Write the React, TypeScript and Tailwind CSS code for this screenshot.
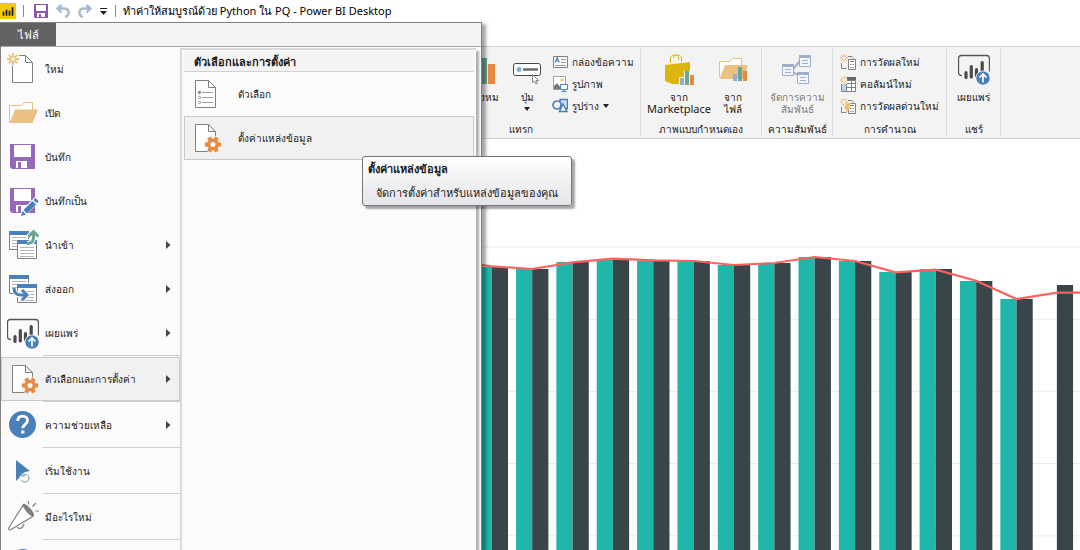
import { ReactNode } from "react";
import clsx from "clsx";

const BLUE = "#4a80ba";
const ORANGE = "#e8893f";
const GREEN = "#6ea592";
const GRAY = "#808080";

/* ---------- icons ---------- */

function Svg({ size = 32, children }: { size?: number; children: ReactNode }) {
  return (
    <svg width={size} height={size} viewBox={`0 0 ${size} ${size}`} fill="none" className="shrink-0" aria-hidden="true">
      {children}
    </svg>
  );
}

function Page() {
  return <path d="M5.5 2.5h13l7 7v20h-20zM18.5 2.5v7h7" fill="#fff" stroke={GRAY} />;
}

function Gear() {
  return (
    <g transform="translate(23 22.5)">
      <circle r="9" fill="#f1f1f1" />
      {[0, 60, 120].map((a) => (
        <rect key={a} x="-2" y="-8" width="4" height="16" fill={ORANGE} transform={`rotate(${a + 30})`} />
      ))}
      <circle r="5.8" fill={ORANGE} />
      <circle r="2.5" fill="#fff" />
    </g>
  );
}

function NewIcon() {
  return (
    <Svg>
      <Page />
      <circle cx="6" cy="6" r="7" fill="#fbfbfb" />
      <path d="M6 0v4M6 8v4M0 6h4M8 6h4M1.8 1.8l2.8 2.8M7.4 7.4l2.8 2.8M10.2 1.8L7.4 4.6M4.6 7.4l-2.8 2.8" stroke="#eabf72" strokeWidth="1.8" />
      <circle cx="6" cy="6" r="2.4" stroke="#eabf72" />
    </Svg>
  );
}

function OpenIcon() {
  return (
    <Svg>
      <path d="M2.5 25.5v-17h12l3-3h8v8" fill="#fff" stroke="#e8bf7f" />
      <path d="M8 12.5h23L25.5 26h-23z" fill="#e9c182" />
    </Svg>
  );
}

function Floppy() {
  return (
    <>
      <path d="M3 3h25v25H5l-2-2z" fill="#9768b9" />
      <path d="M7 4h17v12H7zM9 20h11v7H9z" fill="#fff" />
      <path d="M11 21h3v6h-3z" fill="#9768b9" />
    </>
  );
}

function SaveIcon() {
  return (
    <Svg>
      <Floppy />
    </Svg>
  );
}

function SaveAsIcon() {
  return (
    <Svg>
      <Floppy />
      <path d="M13 32l2-7L28 12l4 3-2 4-12 12z" fill="#fbfbfb" />
      <path d="M14 31l1.5-5 3.5 3.5zM16.5 25l9-9 3.5 3.5-9 9zM26.5 15l2-2 3.2 3.2-2 2z" fill={BLUE} />
    </Svg>
  );
}

function Windows() {
  return (
    <>
      <path d="M2.5 3v17.5h19V3" fill="#fff" stroke={GRAY} />
      <path d="M2 2h20v4H2z" fill={BLUE} />
      <path d="M5 8.5h14M5 11.5h14M5 14.5h5M5 17.5h5" stroke="#b5b5b5" />
      <path d="M10.5 12v17.5h19V12" fill="#fff" stroke={GRAY} />
      <path d="M9 10h22v1H9z" fill="#fbfbfb" />
      <path d="M10 11h20v4H10z" fill={BLUE} />
      <path d="M13 18.5h14M13 21.5h14M13 24.5h14M13 27.5h14" stroke="#b5b5b5" />
    </>
  );
}

function ImportIcon() {
  return (
    <Svg>
      <Windows />
      <path d="M20 14.5c4.5 0 6.5-2 6.5-6V4M21.5 7.500l5-5 5 5" stroke="#fbfbfb" strokeWidth="5" />
      <path d="M20 14.5c4.5 0 6.5-2 6.5-6V4M21.5 7.500l5-5 5 5" stroke={GREEN} strokeWidth="3" />
    </Svg>
  );
}

function ExportIcon() {
  return (
    <Svg>
      <Windows />
      <path d="M7 15c0 5 3 7 7 7h5M15 17l5 5-5 5" stroke="#fff" strokeWidth="5" />
      <path d="M7 15c0 5 3 7 7 7h5M15 17l5 5-5 5" stroke={BLUE} strokeWidth="3" />
    </Svg>
  );
}

function PublishIcon() {
  return (
    <Svg>
      <path d="M4 22.5c-2.5 0-3.500-1-3.500-3V5.500c0-2 1-3 3-3h25c2 0 3 1 3 3v13" stroke="#555" strokeWidth="1.3" />
      <path d="M8 19.5v5M13.3 13.500v10.500M18.500 16.500v6M24.200 9.500v9" stroke="#4a4a4a" strokeWidth="3.2" strokeLinecap="round" />
      <circle cx="25" cy="25" r="7.5" fill="#fbfbfb" />
      <circle cx="25" cy="25" r="6.8" fill={BLUE} />
      <path d="M25 29.500v-8M21.500 24.500l3.500-3.500 3.500 3.500" stroke="#fff" strokeWidth="1.7" />
    </Svg>
  );
}

function SettingsIcon() {
  return (
    <Svg>
      <Page />
      <Gear />
    </Svg>
  );
}

function OptionsIcon() {
  return (
    <Svg>
      <Page />
      <path d="M12 14.5h11M12 19.5h11M12 24.5h11" stroke="#a0a0a0" />
      <circle cx="9.5" cy="14.5" r="1.3" fill={GRAY} stroke={GRAY} strokeWidth=".6" />
      <circle cx="9.5" cy="19.5" r="1.2" stroke={GRAY} strokeWidth=".8" />
      <circle cx="9.5" cy="24.5" r="1.2" stroke={GRAY} strokeWidth=".8" />
    </Svg>
  );
}

function HelpIcon() {
  return (
    <Svg>
      <circle cx="15.5" cy="15.5" r="13.5" fill={BLUE} />
      <path d="M10.8 12c0-3 2-4.800 4.800-4.800 2.900 0 4.900 1.700 4.900 4.300 0 4-4.700 3.700-4.700 7.700" stroke="#fff" strokeWidth="2.8" />
      <path d="M14.2 21.500h3.200v3h-3.200z" fill="#fff" />
    </Svg>
  );
}

function StartIcon() {
  return (
    <Svg>
      <path d="M9 5l14 11-5 1-5 4v1l-4 4z" fill={BLUE} />
      <path d="M15.5 20.200c3-1.800 6.500 0 6.500 2.800 0 2.500-2 4-4 4-1.500 0-3-.8-3.500-2M14.500 17.500v3.500H18" stroke={GREEN} />
    </Svg>
  );
}

function NewsIcon() {
  return (
    <Svg>
      <path d="M16.5 3.500L2 26.500c-.8 1.700.4 2.800 2 2L26.500 15" fill="#fff" stroke={GRAY} strokeWidth="1.2" />
      <path d="M16 3c1.500-1 5 1.500 7.500 4.500s4.500 6.500 3 7.500-4.500-1-7-4.200S14.800 4.200 16 3z" fill={GRAY} />
      <path d="M10 26c2 2.500 6 1.500 7-3M21.500 0v3.500M25.500 5.500L29 2M28.500 10h3.500" stroke={GRAY} strokeWidth="1.2" />
    </Svg>
  );
}

function AboutIcon() {
  return (
    <Svg>
      <circle cx="16" cy="15" r="13" fill={BLUE} />
    </Svg>
  );
}

function VisualIcon() {
  return (
    <Svg>
      <path d="M8 5h9v26H8z" fill={GREEN} />
      <path d="M18 11h7v20h-7z" fill={ORANGE} />
    </Svg>
  );
}

function ButtonIcon() {
  return (
    <Svg>
      <rect x="2.5" y="10.5" width="27" height="12" rx="2" fill="#fff" stroke="#444" />
      <circle cx="8" cy="16.5" r="2.5" fill="#7fb0dc" />
      <path d="M12 16.5h15" stroke="#6b6b6b" strokeWidth="2.5" />
      <path d="M21.5 21.500v8l2-1.500 1.500 3 1.500-.8-1.500-2.700h2.500z" fill="#fff" stroke="#777" strokeWidth=".9" />
    </Svg>
  );
}

function MiniBars() {
  return (
    <>
      <path d="M16 21h4v7h-4z" fill="#8fb0d4" />
      <path d="M21 14h4v14h-4z" fill={GREEN} />
      <path d="M26 18h4v10h-4z" fill={ORANGE} />
    </>
  );
}

function MarketplaceIcon() {
  return (
    <Svg>
      <path d="M7.500 10V5c0-4 8-4 8 0v2M10.500 5c0-4 8-4 8 0v4" stroke="#dcb50f" />
      <path d="M2 12l25-3v22H9l-7-3z" fill="#dcb50f" />
      <path d="M16 24h5v-6h6v3h5v11H16z" fill="#f3f3f3" />
      <g transform="translate(1 4)">
        <MiniBars />
      </g>
    </Svg>
  );
}

function FromFileIcon() {
  return (
    <Svg>
      <path d="M2.5 24V8.500h10l3-3h9v8" fill="#fff" stroke="#e8bf7f" />
      <path d="M8 12h23l-2 7-2 7H2.500z" fill="#e9c182" />
      <MiniBars />
    </Svg>
  );
}

function RelationsIcon() {
  return (
    <Svg>
      <path d="M12 16l7-8M12 19l8 5" stroke="#9fb0cc" strokeWidth="2" />
      {[
        [18, 2],
        [1, 11],
        [16, 19],
      ].map(([x, y]) => (
        <g key={x} transform={`translate(${x} ${y})`}>
          <path d="M.5.5h11v11H.5z" fill="#f3f7fd" stroke="#9fb0cc" />
          <path d="M0 0h12v3H0z" fill="#9fb0cc" />
          <path d="M3 5.500h6M3 8.500h6" stroke="#9fb0cc" />
        </g>
      ))}
    </Svg>
  );
}

function TextBoxIcon() {
  return (
    <Svg size={16}>
      <path d="M1.5 2.5h14v11h-14z" fill="#fff" stroke={GRAY} />
      <path d="M3.2 8.500l2-5 2 5M4 7h2.500" stroke={BLUE} strokeWidth="1.2" />
      <path d="M9 5.500h5M9 8.500h5M3 11.500h11" stroke="#999" />
    </Svg>
  );
}

function ImageIcon() {
  return (
    <Svg size={16}>
      <path d="M1.5.5h12v13h-12z" fill="#fff" stroke="#a0a0a0" />
      <circle cx="10" cy="4" r="1.6" fill="#eabf72" />
      <path d="M2 10l3-3 4 5v1H2z" fill="#777" />
      <path d="M8.500 8.500h7v5h-7zM12 13.500v2M9.500 15.500h5" fill="#fff" stroke={BLUE} />
    </Svg>
  );
}

function ShapesIcon() {
  return (
    <Svg size={16}>
      <path d="M8 1.500h7.500v9H8z" fill="#cfe0f2" stroke={BLUE} strokeWidth="1.5" />
      <circle cx="5" cy="7" r="4" fill="#f3f3f3" stroke={BLUE} strokeWidth="1.7" />
      <path d="M11 6l4 7.500H7.500z" fill="#fff" stroke={BLUE} strokeWidth="1.5" />
    </Svg>
  );
}

function Spark() {
  return (
    <path d="M4 0v2.500M4 5.500V8M0 4h2.500M5.500 4H8M1.200 1.200l1.500 1.500M5.300 5.300l1.500 1.500M6.800 1.200L5.300 2.700M2.700 5.300L1.200 6.800" stroke="#e6ab55" />
  );
}

function MeasureIcon({ quick = false }: { quick?: boolean }) {
  return (
    <Svg size={16}>
      <path d="M1.5 9v5.500h5M8 2.500h4l2 2" stroke={GRAY} />
      <path d="M8.500 5.500h7v10h-7z" fill="#fff" stroke={GRAY} />
      <path d="M10 7.500h4" stroke={GRAY} />
      <path d="M10 10.500h4M10 13.500h4" stroke="#888" strokeDasharray="1 .5" />
      {quick && <path d="M7 5h4L9 9h2l-6 7 1.500-5H4z" fill="#eabf72" />}
      <Spark />
    </Svg>
  );
}

function ColumnIcon() {
  return (
    <Svg size={16}>
      <path d="M1.5 4.500h14v11h-14z" fill="#fff" stroke={GRAY} />
      <path d="M2 8h4v7H2z" fill="#b9d3ee" />
      <path d="M7 1h9v3H7z" fill="#666" />
      <path d="M6.500 5v10M11.500 5v10M6 7.500h9M6 11.500h9" stroke={GRAY} />
      <path d="M0 0h7v8H0z" fill="#f3f3f3" />
      <Spark />
    </Svg>
  );
}

function Caret() {
  return (
    <svg width="6" height="4" viewBox="0 0 6 4" className="shrink-0" aria-hidden="true">
      <path d="M0 0h6L3 4z" fill="#222" />
    </svg>
  );
}

/* ---------- ribbon ---------- */

function BigButton({ icon, children, caret, disabled, className }: { icon: ReactNode; children: ReactNode; caret?: boolean; disabled?: boolean; className?: string }) {
  return (
    <button
      type="button"
      disabled={disabled}
      className={clsx("flex flex-col items-center pt-1 whitespace-nowrap", disabled && "text-[#7c7c7c]", className)}
    >
      {icon}
      <span className="mt-[6px] text-center leading-3">{children}</span>
      {caret && <span className="mt-1"><Caret /></span>}
    </button>
  );
}

function SmallButton({ icon, label, caret }: { icon: ReactNode; label: string; caret?: boolean }) {
  return (
    <button type="button" className="flex h-[22px] items-center gap-1 whitespace-nowrap">
      {icon}
      {label}
      {caret && <Caret />}
    </button>
  );
}

function Group({ label, className, children }: { label: string; className: string; children: ReactNode }) {
  return (
    <section className={clsx("flex shrink-0 flex-col border-r border-[#dcdcdc]", className)}>
      <div className="flex flex-1">{children}</div>
      <h2 className="h-4 text-center leading-[18px] whitespace-nowrap">{label}</h2>
    </section>
  );
}

function Ribbon() {
  return (
    <div className="flex h-[93px] border-y border-[#d2d2d2] bg-[#f3f3f3] py-[2px] pl-[402px]">
      <Group label="แทรก" className="w-[239px]">
        <div className="flex flex-1 justify-end gap-2 pr-2">
          <BigButton icon={<VisualIcon />}>ตั้งหม</BigButton>
          <BigButton icon={<ButtonIcon />} caret className="w-[34px]">
            ปุ่ม
          </BigButton>
          <div className="flex w-[80px] flex-col pt-[2px]">
            <SmallButton icon={<TextBoxIcon />} label="กล่องข้อความ" />
            <SmallButton icon={<ImageIcon />} label="รูปภาพ" />
            <SmallButton icon={<ShapesIcon />} label="รูปร่าง" caret />
          </div>
        </div>
      </Group>
      <Group label="ภาพแบบกำหนดเอง" className="w-[121px]">
        <BigButton icon={<MarketplaceIcon />} className="w-[76px]">
          จาก
          <br />
          <span className="text-[11px]">Marketplace</span>
        </BigButton>
        <BigButton icon={<FromFileIcon />} className="w-8">
          จาก
          <br />
          ไฟล์
        </BigButton>
      </Group>
      <Group label="ความสัมพันธ์" className="w-[71px]">
        <BigButton icon={<RelationsIcon />} disabled className="w-full">
          จัดการความ
          <br />
          สัมพันธ์
        </BigButton>
      </Group>
      <Group label="การคำนวณ" className="w-[114px]">
        <div className="flex flex-col pt-[2px] pl-[7px]">
          <SmallButton icon={<MeasureIcon />} label="การวัดผลใหม่" />
          <SmallButton icon={<ColumnIcon />} label="คอลัมน์ใหม่" />
          <SmallButton icon={<MeasureIcon quick />} label="การวัดผลด่วนใหม่" />
        </div>
      </Group>
      <Group label="แชร์" className="w-[54px]">
        <BigButton icon={<PublishIcon />} className="w-full">
          เผยแพร่
        </BigButton>
      </Group>
    </div>
  );
}

/* ---------- title bar ---------- */

function TitleBar() {
  return (
    <header className="flex h-[22px] items-center bg-white text-black">
      <svg width="16" height="16" viewBox="0 0 16 16" aria-hidden="true">
        <path d="M0 0h16v16H0z" fill="#f2c811" />
        <path d="M3.500 9.500V12M6.500 7.500V12M9.500 8.500V12M12.500 5V12" stroke="#222" strokeWidth="1.8" strokeLinecap="round" />
      </svg>
      <span className="ml-[7px] h-3 w-px bg-[#8a8a8a]" />
      <button type="button" aria-label="บันทึก" className="ml-[10px]">
        <svg width="14" height="14" viewBox="0 0 14 14">
          <path d="M0 0h14v14H1l-1-1z" fill="#8c56b0" />
          <path d="M2 1h10v6H2zM3 9h8v4H3z" fill="#fff" />
          <path d="M5 10h2v4H5z" fill="#8c56b0" />
        </svg>
      </button>
      <button type="button" aria-label="เลิกทำ" className="ml-2">
        <svg width="14" height="14" viewBox="0 0 14 14" fill="none">
          <path d="M5.500 1L1.500 4.500l4 4M2 4.500h6c6 0 6 7 1 8.500" stroke="#a9b9d2" strokeWidth="2.4" />
        </svg>
      </button>
      <button type="button" aria-label="ทำซ้ำ" className="ml-2">
        <svg width="14" height="14" viewBox="0 0 14 14" fill="none">
          <path d="M8.500 1l4 3.500-4 4M12 4.500H6c-6 0-6 7-1 8.500" stroke="#a9b9d2" strokeWidth="2.4" />
        </svg>
      </button>
      <button type="button" aria-label="กำหนดเอง" className="ml-2">
        <svg width="7" height="7" viewBox="0 0 7 7">
          <path d="M0 0h7v1H0zM0 3h7L3.500 7z" fill="#222" />
        </svg>
      </button>
      <span className="ml-2 h-3 w-px bg-[#8a8a8a]" />
      <h1 className="ml-[7px] text-[11px] whitespace-nowrap">ทำค่าให้สมบูรณ์ด้วย Python ใน PQ - Power BI Desktop</h1>
    </header>
  );
}

/* ---------- file menu ---------- */

type MenuItem = { label: string; icon: ReactNode; arrow?: boolean; line?: boolean; active?: boolean };

const menu: MenuItem[] = [
  { label: "ใหม่", icon: <NewIcon /> },
  { label: "เปิด", icon: <OpenIcon /> },
  { label: "บันทึก", icon: <SaveIcon /> },
  { label: "บันทึกเป็น", icon: <SaveAsIcon /> },
  { label: "นำเข้า", icon: <ImportIcon />, arrow: true },
  { label: "ส่งออก", icon: <ExportIcon />, arrow: true },
  { label: "เผยแพร่", icon: <PublishIcon />, arrow: true, line: true },
  { label: "ตัวเลือกและการตั้งค่า", icon: <SettingsIcon />, arrow: true, line: true, active: true },
  { label: "ความช่วยเหลือ", icon: <HelpIcon />, arrow: true, line: true },
  { label: "เริ่มใช้งาน", icon: <StartIcon />, line: true },
  { label: "มีอะไรใหม่", icon: <NewsIcon />, line: true },
  { label: "", icon: <AboutIcon /> },
];

function FileMenu() {
  return (
    <div className="absolute top-[22px] bottom-0 left-0 z-10 flex w-[482px] flex-col border-t border-r border-l border-[#808080] bg-[#fbfbfb] shadow-[4px_2px_3px_rgba(0,0,0,0.35)]">
      <div className="h-6 shrink-0 border-b border-[#a8a8a8] bg-[#f4f4f4]">
        <button type="button" className="-ml-px block h-[23px] w-14 bg-[#626262] text-[11px] text-white">
          ไฟล์
        </button>
      </div>
      <div className="flex min-h-0 flex-1">
        <nav className="w-[179px] shrink-0 overflow-hidden">
          {menu.map((m, i) => (
            <div key={i}>
              <button
                type="button"
                aria-label={m.label || "เกี่ยวกับ"}
                className={clsx(
                  "flex h-11 w-full items-center gap-[6px] border pr-2 pl-[5px] text-left whitespace-nowrap",
                  m.active ? "border-[#c9c9c9] bg-[#f1f1f1]" : "border-transparent"
                )}
              >
                {m.icon}
                <span className="flex-1">{m.label}</span>
                {m.arrow && (
                  <svg width="5" height="8" viewBox="0 0 5 8" aria-hidden="true">
                    <path d="M0 0l4.500 4L0 8z" fill="#444" />
                  </svg>
                )}
              </button>
              {m.line && <div className="mb-px ml-[42px] h-px bg-[#cfcfcf]" />}
            </div>
          ))}
        </nav>
        <div className="mt-px mr-[5px] flex flex-1 flex-col border-t-2 border-l-2 border-[#dadada] px-[2px] shadow-[3px_3px_2px_rgba(0,0,0,0.3)]">
          <h2 className="mt-px flex h-[21px] items-center border-b border-[#d2d2d2] bg-[#f4f4f4] pt-px pl-[10px] text-[11px] font-bold">ตัวเลือกและการตั้งค่า</h2>
          <button type="button" className="flex h-11 items-center gap-4 border border-transparent pl-[5px]">
            <OptionsIcon />
            ตัวเลือก
          </button>
          <button type="button" className="flex h-11 items-center gap-4 border border-[#c9c9c9] bg-[#f1f1f1] pl-[5px]">
            <SettingsIcon />
            ตั้งค่าแหล่งข้อมูล
          </button>
        </div>
      </div>
      <div
        role="tooltip"
        className="absolute top-[133px] left-[361px] flex h-[50px] w-[210px] flex-col justify-between rounded-[3px] border border-[#767676] bg-linear-to-b from-white to-[#e4e5e8] px-[5px] py-1 text-[11px] whitespace-nowrap shadow-[3px_3px_2px_rgba(0,0,0,0.35)]"
      >
        <strong>ตั้งค่าแหล่งข้อมูล</strong>
        <span className="pl-2">จัดการตั้งค่าสำหรับแหล่งข้อมูลของคุณ</span>
      </div>
    </div>
  );
}

/* ---------- chart ---------- */

// tops of each column pair; the last pair has no teal column
const bars = [267, 269, 262, 260, 261, 261, 265, 263, 257, 261, 272, 269, 281, 299, 285];
const line = [266.3, 269, 262.3, 258.7, 260.3, 261, 265, 263, 257, 261, 272.3, 269.7, 280.7, 299, 292.6];
const step = 40.36;
const x0 = 475.64;

function Chart() {
  const points = line.map((y, i) => `${x0 + 16.2 + i * step},${y}`).join(" ");
  return (
    <main className="min-h-0 flex-1 overflow-hidden bg-white">
      <svg width="1080" height="411" viewBox="0 139 1080 411" role="img" aria-label="Chart">
        {[247, 319.4, 391.4, 463.5, 535.8].map((y) => (
          <path key={y} d={`M0 ${y}h1080`} stroke="#ebebeb" />
        ))}
        {bars.map((y, i) => (
          <g key={i}>
            {i < bars.length - 1 && <rect x={x0 + i * step} y={y} width="16.2" height="300" fill="#1eb7aa" />}
            <rect x={x0 + 16.2 + i * step} y={y} width="16.2" height="300" fill="#384549" />
          </g>
        ))}
        <polyline points={`470,263.5 ${points} 1080,292.6`} fill="none" stroke="#fd625e" strokeWidth="2.2" />
      </svg>
    </main>
  );
}

export default function App() {
  return (
    <div className="relative flex h-screen flex-col overflow-hidden bg-white font-['Noto_Sans',sans-serif] text-[10px] leading-4 text-[#1a1a1a]">
      <TitleBar />
      <div className="h-6 shrink-0" />
      <Ribbon />
      <Chart />
      <FileMenu />
    </div>
  );
}
